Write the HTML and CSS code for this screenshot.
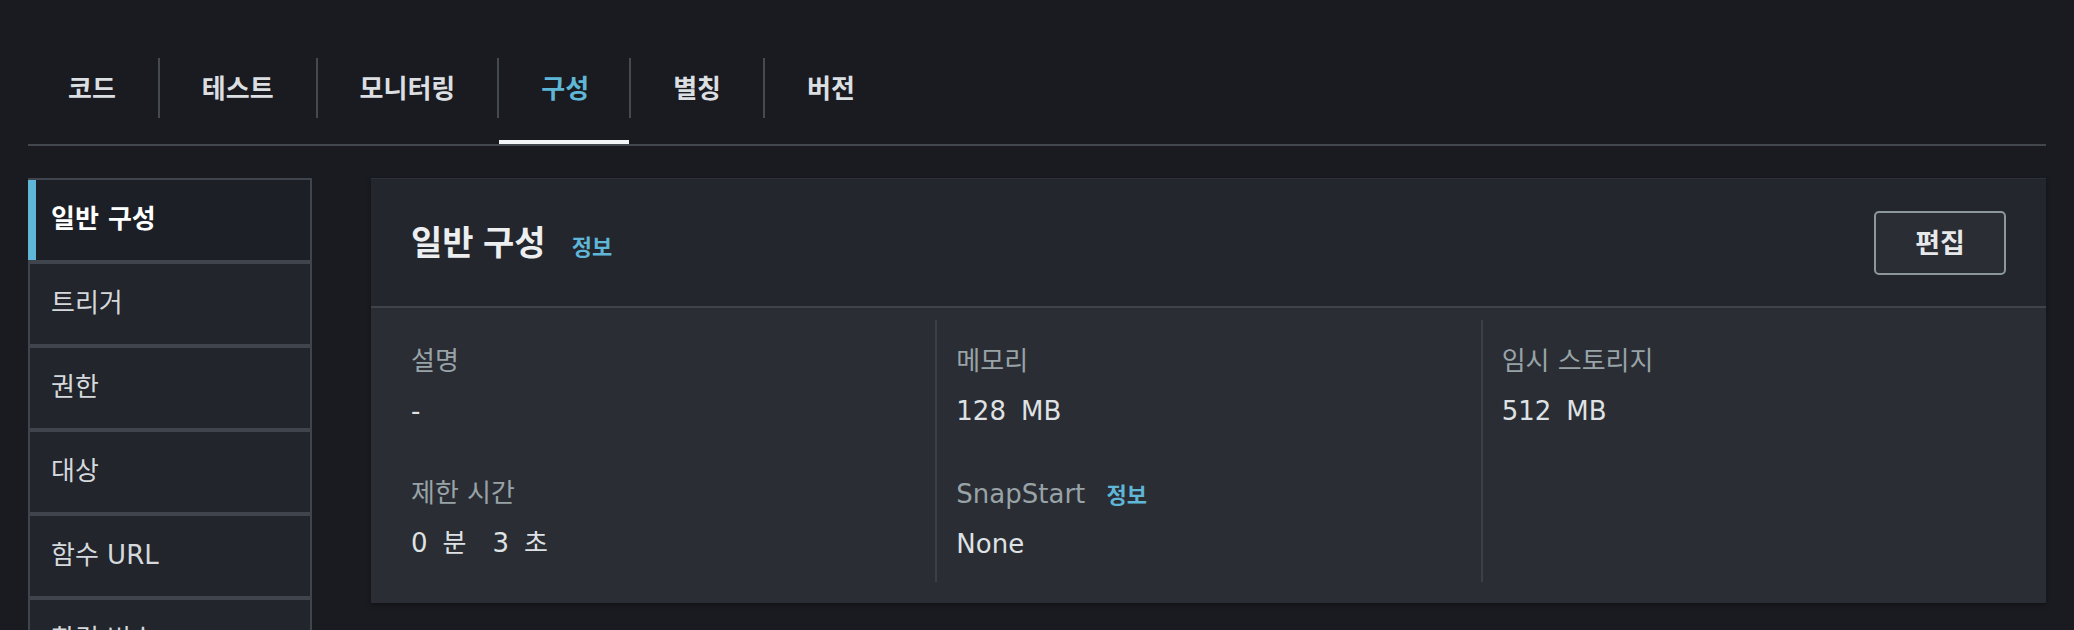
FILE: index.html
```html
<!DOCTYPE html>
<html lang="ko">
<head>
    <meta charset="UTF-8">
    <meta name="viewport" content="width=device-width, initial-scale=1.0">
    <title>구성</title>
    <link rel="stylesheet" href="styles.css">
</head>
<body>
    <!-- Top tabs -->
    <nav class="tabs">
        <div class="tab"><span class="tab-label">코드</span></div>
        <div class="tab"><span class="tab-label">테스트</span></div>
        <div class="tab"><span class="tab-label">모니터링</span></div>
        <div class="tab active"><span class="tab-label">구성</span></div>
        <div class="tab"><span class="tab-label">별칭</span></div>
        <div class="tab"><span class="tab-label">버전</span></div>
    </nav>

    <div class="layout">
        <!-- Config sections -->
        <ul class="side-nav">
            <li class="side-item active">일반 구성</li>
            <li class="side-item">트리거</li>
            <li class="side-item">권한</li>
            <li class="side-item">대상</li>
            <li class="side-item">함수 URL</li>
            <li class="side-item">환경 변수</li>
        </ul>

        <section class="panel">
            <header class="panel-header">
                <div class="panel-title">
                    <h2>일반 구성</h2>
                    <a class="info" href="#">정보</a>
                </div>
                <button class="btn">편집</button>
            </header>

            <div class="panel-body">
                <div class="col">
                    <div class="field">
                        <div class="field-label">설명</div>
                        <div class="field-value">-</div>
                    </div>
                    <div class="field">
                        <div class="field-label">제한 시간</div>
                        <div class="field-value">
                            <span class="qty">0<span class="unit">분</span></span><span class="qty">3<span class="unit">초</span></span>
                        </div>
                    </div>
                </div>
                <div class="col">
                    <div class="field">
                        <div class="field-label">메모리</div>
                        <div class="field-value"><span class="qty">128<span class="unit">MB</span></span></div>
                    </div>
                    <div class="field">
                        <div class="field-label">SnapStart <a class="info" href="#">정보</a></div>
                        <div class="field-value">None</div>
                    </div>
                </div>
                <div class="col">
                    <div class="field">
                        <div class="field-label">임시 스토리지</div>
                        <div class="field-value"><span class="qty">512<span class="unit">MB</span></span></div>
                    </div>
                </div>
            </div>
        </section>
    </div>
</body>
</html>
```

FILE: styles.css
```css
html, body {
    height: 100%;
}

body {
    margin: 0;
    padding: 0 28px;
    background-color: #1a1b20;
    color: #d9dde0;
    font-family: "DejaVu Sans", "Noto Sans CJK KR", sans-serif;
    font-size: 26px;
    overflow: hidden; /* sections list runs past the window */
}

/* ---- tabs ---- */
.tabs {
    display: flex;
    margin-top: 36px;
    border-bottom: 2px solid #42464d;
}

.tab {
    position: relative;
    padding: 22px 0 26px;
}

.tab-label {
    display: flex;
    align-items: center;
    box-sizing: border-box;
    height: 60px;
    padding: 0 42px 3px;
    border-left: 2px solid #454950;
    color: #dcdfe2;
    font-family: "Noto Sans CJK KR", sans-serif;
    font-weight: 700;
    font-size: 26px;
}

.tab:first-child .tab-label {
    border-left: none;
    padding-left: 40px;
}

.tab.active .tab-label {
    color: #5fb6d6;
    padding-right: 40px;
}

.tab.active::after {
    content: "";
    position: absolute;
    left: 2px;
    right: 0;
    bottom: 0;
    height: 4px;
    background: #f4f5f6;
}

/* ---- page layout ---- */
.layout {
    display: flex;
    align-items: flex-start;
    gap: 59px;
    margin-top: 32px;
}

.side-nav {
    list-style: none;
    margin: 0;
    padding: 0;
    width: 280px;
    flex-shrink: 0;
    display: flex;
    flex-direction: column;
    gap: 4px;
    background: #40444c;
    border: 2px solid #40444c;
    border-bottom: none;
}

.side-item {
    display: flex;
    align-items: center;
    box-sizing: border-box;
    height: 80px;
    padding: 0 0 2px 21px;
    background: #22252c;
    color: #d5d9dc;
    line-height: 1;
}

.side-item.active {
    margin-left: -2px;
    padding-left: 15px;
    border-left: 8px solid #5fb6d6;
    background: #1c1f26;
    color: #ffffff;
    font-weight: 700;
}

/* ---- panel ---- */
.panel {
    flex: 1;
    background: #2a2d33;
    border-top: 1px solid #2e3139;
    box-shadow: 0 2px 4px rgba(0, 0, 0, 0.35);
}

.panel-header {
    display: flex;
    align-items: center;
    justify-content: space-between;
    height: 127px;
    padding: 0 40px;
    background: #23262d;
    border-bottom: 2px solid #3f434b;
}

.panel-title {
    display: flex;
    align-items: baseline;
    gap: 26px;
    padding-bottom: 5px;
}

.panel-title h2 {
    margin: 0;
    color: #eceef0;
    font-family: "Noto Sans CJK KR", sans-serif;
    font-size: 34px;
    font-weight: 700;
}

.info {
    color: #5fb6d6;
    font-family: "Noto Sans CJK KR", sans-serif;
    font-size: 22px;
    font-weight: 700;
    text-decoration: none;
}

.btn {
    width: 132px;
    height: 64px;
    padding: 0 0 3px;
    background: #2a2d33;
    border: 2px solid #8b979b;
    border-radius: 5px;
    color: #e6e8ea;
    font-family: "Noto Sans CJK KR", sans-serif;
    font-size: 27px;
    font-weight: 700;
    cursor: pointer;
}

.panel-body {
    display: grid;
    grid-template-columns: repeat(3, 1fr);
    padding: 12px 20px 21px 19px;
}

.col {
    padding: 23px 0 20px 21px;
}

.col + .col {
    padding-left: 19px;
    border-left: 2px solid #3b3f46;
}

.field + .field {
    margin-top: 46px;
}

.field-label {
    line-height: 36px;
    color: #98a3a8;
}

.field-label .info {
    margin-left: 13px;
}

.field-value {
    margin-top: 14px;
    line-height: 36px;
    color: #dfe2e5;
}

.unit {
    margin-left: 15px;
}

.qty + .qty {
    margin-left: 26px;
}
```
